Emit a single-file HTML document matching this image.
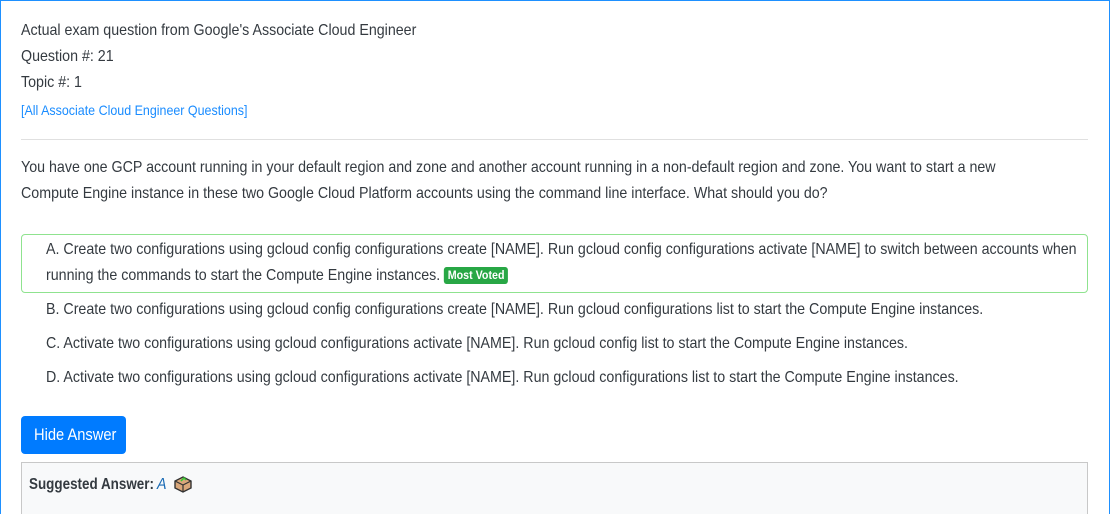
<!DOCTYPE html>
<html><head><meta charset="utf-8"><style>
html,body{margin:0;padding:0;overflow:hidden;}
body{width:1110px;height:514px;background:#fff;font-family:"Liberation Sans",sans-serif;color:#343a40;font-size:16px;position:relative;}
.frame{position:absolute;left:0;top:0;width:1108px;height:520px;border:1px solid #1e90ff;border-bottom:none;}
.t{position:absolute;left:21px;white-space:nowrap;transform:scaleX(0.89);transform-origin:0 0;}
.link{color:#1a8cff;font-size:14px;}
hr{position:absolute;left:21px;width:1067px;top:139px;margin:0;border:0;border-top:1px solid #e0e0e0;}
.ans{position:absolute;left:21px;width:1067px;top:234px;height:59px;border:1px solid #8fe38f;border-radius:4px;box-sizing:border-box;}
.mv{display:inline-block;background:#28a745;color:#fff;font-size:12px;font-weight:bold;padding:2px 4px;border-radius:3px;line-height:13px;vertical-align:1px;}
.btn{position:absolute;left:21px;top:416px;width:105px;height:38px;background:#007bff;color:#fff;border-radius:4px;font-size:16px;line-height:38px;}
.card{position:absolute;left:21px;top:462px;width:1067px;height:60px;background:#f8f9fa;border:1px solid #c8c8c8;box-sizing:border-box;}
</style></head><body>
<div class="frame"></div>
<div class="t" style="top:22px">Actual exam question from Google's Associate Cloud Engineer</div>
<div class="t" style="top:48px">Question #: 21</div>
<div class="t" style="top:74px">Topic #: 1</div>
<div class="t link" style="top:102px">[All Associate Cloud Engineer Questions]</div>
<hr>
<div class="t" style="top:159px">You have one GCP account running in your default region and zone and another account running in a non-default region and zone. You want to start a new</div>
<div class="t" style="top:185px">Compute Engine instance in these two Google Cloud Platform accounts using the command line interface. What should you do?</div>
<div class="ans"></div>
<div class="t" style="left:46px;top:241px">A. Create two configurations using gcloud config configurations create [NAME]. Run gcloud config configurations activate [NAME] to switch between accounts when</div>
<div class="t" style="left:46px;top:267px">running the commands to start the Compute Engine instances. <span class="mv">Most Voted</span></div>
<div class="t" style="left:46px;top:301px">B. Create two configurations using gcloud config configurations create [NAME]. Run gcloud configurations list to start the Compute Engine instances.</div>
<div class="t" style="left:46px;top:335px">C. Activate two configurations using gcloud configurations activate [NAME]. Run gcloud config list to start the Compute Engine instances.</div>
<div class="t" style="left:46px;top:369px">D. Activate two configurations using gcloud configurations activate [NAME]. Run gcloud configurations list to start the Compute Engine instances.</div>
<div class="btn"><span class="t" style="left:13px;top:0;color:#fff;font-size:16.5px">Hide Answer</span></div>
<div class="card"></div>
<div class="t" style="left:29px;top:476px;font-weight:bold;transform:scaleX(0.84)">Suggested Answer:</div>
<div class="t" style="left:157px;top:476px;font-style:italic;color:#1a6bb5">A</div>
<svg style="position:absolute;left:173px;top:474px" width="20" height="20" viewBox="0 0 20 20"><path d="M10 3 L18 7 L18 14 L10 18 L2 14 L2 7Z" fill="#d9a77a" stroke="#333" stroke-width="1.4"/><path d="M2 7 L10 11 L18 7 M10 11 V18" fill="none" stroke="#333" stroke-width="1.2"/><path d="M8 7 L11 4 L13 6" stroke="#3c3" stroke-width="1.5" fill="none"/></svg>
</body></html>
